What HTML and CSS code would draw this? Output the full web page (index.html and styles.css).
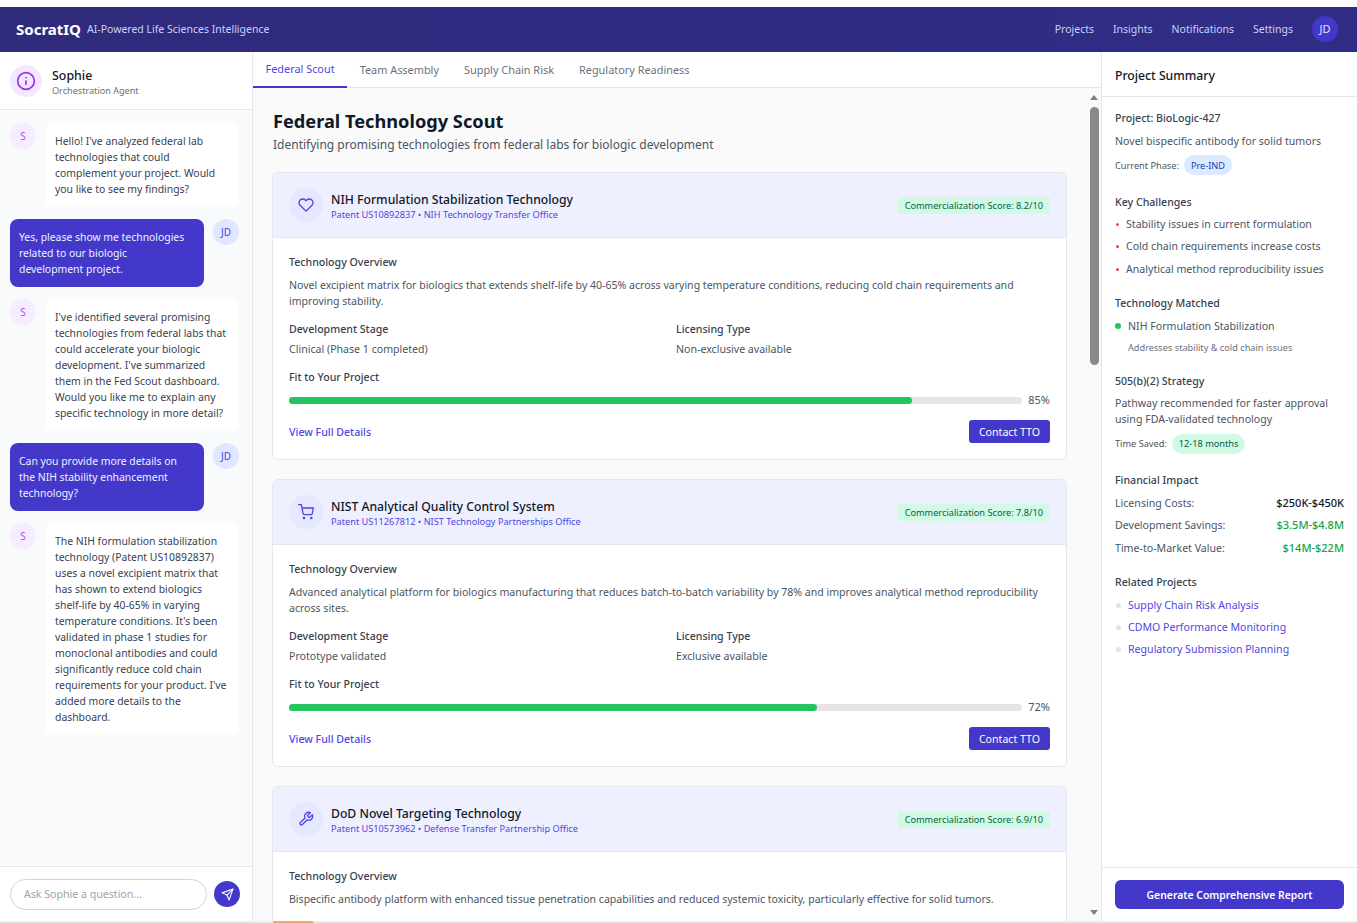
FILE: index.html
```html
<!DOCTYPE html>
<html>
<head>
<title>SocratIQ</title>
<link rel="stylesheet" href="styles.css">
</head>
<body>

<header class="topbar">
<div class="brand">
<span class="logo">SocratIQ</span>
<span class="tagline">AI-Powered Life Sciences Intelligence</span>
</div>
<nav class="topnav">
<a>Projects</a>
<a>Insights</a>
<a>Notifications</a>
<a>Settings</a>
<span class="me">JD</span>
</nav>
</header>

<div class="layout">

<aside class="chat">
<div class="agent">
<div class="agent-icon">
<svg width="20" height="20" viewBox="0 0 24 24" fill="none" stroke="#9333ea" stroke-width="2" stroke-linecap="round" stroke-linejoin="round"><circle cx="12" cy="12" r="10"/><line x1="12" y1="16" x2="12" y2="12"/><line x1="12" y1="8" x2="12.01" y2="8"/></svg>
</div>
<div class="agent-text">
<div class="agent-name">Sophie</div>
<div class="agent-role">Orchestration Agent</div>
</div>
</div>
<div class="messages">
<div class="msg">
<span class="av av-s">S</span>
<p class="bubble">Hello! I've analyzed federal lab technologies that could complement your project. Would you like to see my findings?</p>
</div>
<div class="msg msg-me">
<p class="bubble">Yes, please show me technologies related to our biologic development project.</p>
<span class="av av-me">JD</span>
</div>
<div class="msg">
<span class="av av-s">S</span>
<p class="bubble">I've identified several promising technologies from federal labs that could accelerate your biologic development. I've summarized them in the Fed Scout dashboard. Would you like me to explain any specific technology in more detail?</p>
</div>
<div class="msg msg-me">
<p class="bubble">Can you provide more details on the NIH stability enhancement technology?</p>
<span class="av av-me">JD</span>
</div>
<div class="msg">
<span class="av av-s">S</span>
<p class="bubble">The NIH formulation stabilization technology (Patent US10892837) uses a novel excipient matrix that has shown to extend biologics shelf-life by 40-65% in varying temperature conditions. It's been validated in phase 1 studies for monoclonal antibodies and could significantly reduce cold chain requirements for your product. I've added more details to the dashboard.</p>
</div>
</div>
<div class="ask">
<div class="ask-input">Ask Sophie a question...</div>
<button class="ask-send">
<svg width="13" height="13" viewBox="0 0 24 24" fill="none" stroke="#fff" stroke-width="2" stroke-linecap="round" stroke-linejoin="round"><line x1="22" y1="2" x2="11" y2="13"/><polygon points="22 2 15 22 11 13 2 9 22 2"/></svg>
</button>
</div>
</aside>

<main class="center">
<div class="tabs">
<a class="tab active">Federal Scout</a>
<a class="tab">Team Assembly</a>
<a class="tab">Supply Chain Risk</a>
<a class="tab">Regulatory Readiness</a>
</div>
<div class="scroller">
<div class="content">
<h1>Federal Technology Scout</h1>
<p class="lead">Identifying promising technologies from federal labs for biologic development</p>

<section class="card">
<div class="card-head">
<div class="card-icon">
<svg width="16" height="16" viewBox="0 0 24 24" fill="none" stroke="#4f46e5" stroke-width="2" stroke-linecap="round" stroke-linejoin="round"><path d="M20.84 4.61a5.5 5.5 0 0 0-7.78 0L12 5.67l-1.06-1.06a5.5 5.5 0 0 0-7.78 7.78l1.06 1.06L12 21.23l7.78-7.78 1.06-1.06a5.5 5.5 0 0 0 0-7.78z"/></svg>
</div>
<div class="card-title">
<h2>NIH Formulation Stabilization Technology</h2>
<div class="patent">Patent US10892837 • NIH Technology Transfer Office</div>
</div>
<span class="score">Commercialization Score: 8.2/10</span>
</div>
<div class="card-body">
<h3>Technology Overview</h3>
<p class="overview">Novel excipient matrix for biologics that extends shelf-life by 40-65% across varying temperature conditions, reducing cold chain requirements and improving stability.</p>
<div class="facts">
<div><h3>Development Stage</h3><p>Clinical (Phase 1 completed)</p></div>
<div><h3>Licensing Type</h3><p>Non-exclusive available</p></div>
</div>
<h3>Fit to Your Project</h3>
<div class="fit">
<div class="bar"><div class="bar-fill" style="width: 85%"></div></div>
<span>85%</span>
</div>
<div class="card-foot">
<a class="link">View Full Details</a>
<button class="tto">Contact TTO</button>
</div>
</div>
</section>

<section class="card">
<div class="card-head">
<div class="card-icon">
<svg width="16" height="16" viewBox="0 0 24 24" fill="none" stroke="#4f46e5" stroke-width="2" stroke-linecap="round" stroke-linejoin="round"><circle cx="9" cy="21" r="1"/><circle cx="20" cy="21" r="1"/><path d="M1 1h4l2.68 13.39a2 2 0 0 0 2 1.61h9.72a2 2 0 0 0 2-1.61L23 6H6"/></svg>
</div>
<div class="card-title">
<h2>NIST Analytical Quality Control System</h2>
<div class="patent">Patent US11267812 • NIST Technology Partnerships Office</div>
</div>
<span class="score">Commercialization Score: 7.8/10</span>
</div>
<div class="card-body">
<h3>Technology Overview</h3>
<p class="overview">Advanced analytical platform for biologics manufacturing that reduces batch-to-batch variability by 78% and improves analytical method reproducibility across sites.</p>
<div class="facts">
<div><h3>Development Stage</h3><p>Prototype validated</p></div>
<div><h3>Licensing Type</h3><p>Exclusive available</p></div>
</div>
<h3>Fit to Your Project</h3>
<div class="fit">
<div class="bar"><div class="bar-fill" style="width: 72%"></div></div>
<span>72%</span>
</div>
<div class="card-foot">
<a class="link">View Full Details</a>
<button class="tto">Contact TTO</button>
</div>
</div>
</section>

<section class="card">
<div class="card-head">
<div class="card-icon">
<svg width="16" height="16" viewBox="0 0 24 24" fill="none" stroke="#4f46e5" stroke-width="2" stroke-linecap="round" stroke-linejoin="round"><path d="M14.7 6.3a1 1 0 0 0 0 1.4l1.6 1.6a1 1 0 0 0 1.4 0l3.77-3.77a6 6 0 0 1-7.94 7.94l-6.91 6.91a2.12 2.12 0 0 1-3-3l6.91-6.91a6 6 0 0 1 7.94-7.94l-3.76 3.76z"/></svg>
</div>
<div class="card-title">
<h2>DoD Novel Targeting Technology</h2>
<div class="patent">Patent US10573962 • Defense Transfer Partnership Office</div>
</div>
<span class="score">Commercialization Score: 6.9/10</span>
</div>
<div class="card-body">
<h3>Technology Overview</h3>
<p class="overview">Bispecific antibody platform with enhanced tissue penetration capabilities and reduced systemic toxicity, particularly effective for solid tumors.</p>
</div>
</section>
</div>
<div class="scrollbar">
<span class="arrow-up"></span>
<span class="thumb"></span>
<span class="arrow-down"></span>
</div>
</div>
</main>

<aside class="summary">
<div class="summary-head">Project Summary</div>
<div class="summary-body">
<div class="block">
<h4>Project: BioLogic-427</h4>
<p>Novel bispecific antibody for solid tumors</p>
<div class="tagrow"><span>Current Phase:</span><em class="tag tag-blue">Pre-IND</em></div>
</div>
<div class="block">
<h4>Key Challenges</h4>
<ul class="risks">
<li>Stability issues in current formulation</li>
<li>Cold chain requirements increase costs</li>
<li>Analytical method reproducibility issues</li>
</ul>
</div>
<div class="block">
<h4>Technology Matched</h4>
<div class="matched">NIH Formulation Stabilization</div>
<div class="matched-note">Addresses stability &amp; cold chain issues</div>
</div>
<div class="block">
<h4>505(b)(2) Strategy</h4>
<p>Pathway recommended for faster approval using FDA-validated technology</p>
<div class="tagrow"><span>Time Saved:</span><em class="tag tag-green">12-18 months</em></div>
</div>
<div class="block">
<h4>Financial Impact</h4>
<div class="money"><span>Licensing Costs:</span><b>$250K-$450K</b></div>
<div class="money"><span>Development Savings:</span><b class="green">$3.5M-$4.8M</b></div>
<div class="money"><span>Time-to-Market Value:</span><b class="green">$14M-$22M</b></div>
</div>
<div class="block">
<h4>Related Projects</h4>
<ul class="related">
<li>Supply Chain Risk Analysis</li>
<li>CDMO Performance Monitoring</li>
<li>Regulatory Submission Planning</li>
</ul>
</div>
</div>
<div class="summary-foot">
<button class="report">Generate Comprehensive Report</button>
</div>
</aside>

</div>
<div class="edge"></div>
</body>
</html>
```

FILE: styles.css
```css
*{
box-sizing: border-box;
}
html, body{
height: 100%;
}
body{
margin: 0;
padding-top: 7px;
display: flex;
flex-direction: column;
overflow: hidden;
font-family: "Noto Sans", "Liberation Sans", sans-serif;
font-size: 10.6px;
color: #4b5563;
background-color: #fff;
}
h1, h2, h3, h4, p, ul{
margin: 0;
padding: 0;
}
ul{
list-style: none;
}
button{
font-family: inherit;
border: none;
}

/* top bar */
.topbar{
height: 45px;
flex: none;
display: flex;
align-items: center;
justify-content: space-between;
padding: 0 19px 2px 16px;
color: #fff;
background: linear-gradient(90deg, #2f2a7c, #312c85);
}
.brand{
display: flex;
align-items: center;
gap: 6px;
}
.logo{
font-size: 15px;
font-weight: 700;
}
.tagline{
font-size: 10.5px;
color: #c7d2fe;
}
.topnav{
display: flex;
align-items: center;
gap: 19px;
font-size: 10.5px;
color: #c7d2fe;
}
.me{
width: 26px;
height: 26px;
border-radius: 50%;
display: flex;
align-items: center;
justify-content: center;
font-size: 11px;
color: #e0e7ff;
background-color: #4338ca;
}

.layout{
flex: 1;
min-height: 0;
display: flex;
}

/* left chat column */
.chat{
width: 253px;
flex: none;
display: flex;
flex-direction: column;
border-right: 1px solid #e5e7eb;
background-color: #f9fafb;
}
.agent{
height: 58px;
flex: none;
display: flex;
align-items: center;
gap: 10px;
padding: 0 10px;
background-color: #fff;
border-bottom: 1px solid #e5e7eb;
}
.agent-icon{
width: 32px;
height: 32px;
border-radius: 50%;
display: flex;
align-items: center;
justify-content: center;
background-color: #f3e8ff;
}
.agent-text{
padding-top: 2px;
}
.agent-name{
font-size: 12.4px;
font-weight: 500;
color: #111827;
}
.agent-role{
font-size: 9.1px;
color: #6b7280;
}
.messages{
flex: 1;
min-height: 0;
overflow: hidden;
padding: 13px 13px 0 10px;
}
.msg{
display: flex;
align-items: flex-start;
gap: 9px;
margin-bottom: 12px;
}
.av{
width: 26px;
height: 26px;
flex: none;
border-radius: 50%;
display: flex;
align-items: center;
justify-content: center;
font-size: 10px;
}
.av-s{
color: #a855f7;
background-color: #f5ecff;
}
.av-me{
color: #4f46e5;
background-color: #e0e7ff;
}
.bubble{
flex: 1;
padding: 10px;
font-size: 10.4px;
line-height: 16px;
color: #374151;
background-color: #fff;
border-radius: 8px;
}
.msg-me .bubble{
padding-left: 9px;
padding-right: 15px;
color: #eef2ff;
background-color: #4338ca;
}
.ask{
height: 55px;
flex: none;
display: flex;
align-items: center;
gap: 7px;
padding: 0 12px 0 10px;
background-color: #fff;
border-top: 1px solid #e5e7eb;
}
.ask-input{
flex: 1;
height: 31px;
padding: 0 13px;
display: flex;
align-items: center;
color: #9ca3af;
border: 1px solid #d1d5db;
border-radius: 16px;
}
.ask-send{
width: 26px;
height: 26px;
padding: 0;
border-radius: 50%;
display: flex;
align-items: center;
justify-content: center;
background-color: #4338ca;
}

/* center column */
.center{
flex: 1;
min-width: 0;
display: flex;
flex-direction: column;
background-color: #fafafa;
}
.tabs{
height: 36px;
flex: none;
display: flex;
background-color: #fff;
border-bottom: 1px solid #e5e7eb;
}
.tab{
height: 36px;
padding: 0 12.5px 2px;
display: flex;
align-items: center;
font-size: 10.9px;
color: #6b7280;
}
.tab.active{
color: #4f46e5;
border-bottom: 2px solid #4338ca;
}
.scroller{
flex: 1;
min-height: 0;
display: flex;
}
.content{
flex: 1;
min-width: 0;
overflow: hidden;
padding: 21px 20px 0 19px;
}
h1{
margin-left: 1px;
font-size: 18.2px;
font-weight: 700;
line-height: 24px;
color: #111827;
}
.lead{
margin: 1px 0 16px 1px;
font-size: 12px;
line-height: 22px;
}
.card{
margin-bottom: 19px;
background-color: #fff;
border: 1px solid #e5e7eb;
border-radius: 6px;
}
.card-head{
height: 65px;
display: flex;
align-items: center;
padding: 0 16px;
background-color: #eef0ff;
border-bottom: 1px solid #e5e7eb;
}
.card-icon{
width: 34px;
height: 34px;
flex: none;
margin-right: 8px;
border-radius: 50%;
display: flex;
align-items: center;
justify-content: center;
background-color: #e5e8ff;
}
.card-title{
flex: 1;
padding-top: 3px;
}
.card-title h2{
font-size: 12.2px;
font-weight: 500;
line-height: 16px;
color: #111827;
}
.patent{
font-size: 9.2px;
line-height: 14px;
color: #4f46e5;
}
.score{
padding: 2px 7px;
font-size: 9.2px;
color: #065f46;
background-color: #d1fae5;
}
.card-body{
padding: 16px 16px 16px;
}
h3{
font-size: 10.6px;
font-weight: 500;
line-height: 16px;
color: #374151;
}
.overview{
margin: 7px 0 12px;
font-size: 10.55px;
line-height: 16px;
}
.facts{
display: grid;
grid-template-columns: 1fr 1fr;
gap: 13px;
margin-bottom: 12px;
}
.facts p{
margin-top: 4px;
line-height: 16px;
}
.fit{
display: flex;
align-items: center;
gap: 6px;
margin-top: 7px;
height: 16px;
font-size: 11px;
}
.fit span{
padding-bottom: 2px;
}
.bar{
flex: 1;
height: 7px;
border-radius: 4px;
background-color: #e8e4e4;
}
.bar-fill{
height: 7px;
border-radius: 4px;
background-color: #22c55e;
}
.card-foot{
display: flex;
align-items: center;
justify-content: space-between;
margin-top: 12px;
}
.link{
color: #4f46e5;
font-weight: 500;
}
.tto{
height: 23px;
width: 81px;
padding: 0;
font-size: 10.6px;
color: #fff;
background-color: #4338ca;
border-radius: 3px;
}

/* painted scrollbar */
.scrollbar{
width: 14px;
flex: none;
display: flex;
flex-direction: column;
align-items: center;
padding: 7px 0 6px;
}
.arrow-up, .arrow-down{
width: 0;
height: 0;
border-left: 4.5px solid transparent;
border-right: 4.5px solid transparent;
}
.arrow-up{
border-bottom: 5px solid #808080;
}
.arrow-down{
margin-top: auto;
border-top: 5px solid #808080;
}
.thumb{
width: 9px;
height: 258px;
margin-top: 7px;
border-radius: 5px;
background-color: #8a8a8a;
}

/* right column */
.summary{
width: 256px;
flex: none;
display: flex;
flex-direction: column;
background-color: #fff;
border-left: 1px solid #e5e7eb;
}
.summary-head{
height: 45px;
flex: none;
display: flex;
align-items: center;
padding: 2px 13px 0;
font-size: 12.2px;
font-weight: 500;
color: #111827;
border-bottom: 1px solid #e5e7eb;
}
.summary-body{
flex: 1;
min-height: 0;
overflow: hidden;
padding: 13px 13px 0 13px;
}
.block{
margin-bottom: 18.5px;
}
h4{
font-size: 10.6px;
font-weight: 500;
line-height: 16px;
color: #374151;
margin-bottom: 6.5px;
}
.block p{
line-height: 16px;
}
.tagrow{
display: flex;
align-items: center;
gap: 5px;
margin-top: 6.5px;
font-size: 9.2px;
}
.tag{
height: 20px;
padding: 0 7px;
display: flex;
align-items: center;
font-style: normal;
border-radius: 10px;
}
.tag-blue{
color: #1e40af;
background-color: #dbeafe;
}
.tag-green{
color: #065f46;
background-color: #d1fae5;
}
.risks li{
position: relative;
padding-left: 11px;
margin-bottom: 6.3px;
line-height: 16px;
}
.risks li:last-child{
margin-bottom: 0;
}
.risks li::before{
content: "";
position: absolute;
left: 1px;
top: 7px;
width: 3px;
height: 3px;
border-radius: 50%;
background-color: #ef4444;
}
.matched{
position: relative;
padding-left: 13px;
line-height: 16px;
}
.matched::before{
content: "";
position: absolute;
left: 0;
top: 5px;
width: 6px;
height: 6px;
border-radius: 50%;
background-color: #22c55e;
}
.matched-note{
margin-top: 7.5px;
padding-left: 13px;
font-size: 9.2px;
line-height: 13px;
color: #6b7280;
}
.money{
display: flex;
justify-content: space-between;
height: 22.5px;
line-height: 16px;
}
.money:last-child{
height: 16px;
}
.money b{
font-size: 11px;
font-weight: 500;
color: #111827;
}
.money b.green{
color: #16a34a;
}
.related li{
position: relative;
padding-left: 13px;
margin-bottom: 6.3px;
line-height: 16px;
color: #4f46e5;
}
.related li::before{
content: "";
position: absolute;
left: 1px;
top: 6px;
width: 5px;
height: 5px;
border-radius: 50%;
background-color: #dde1fb;
}
.summary-foot{
height: 54px;
flex: none;
padding: 12px 13px 0;
border-top: 1px solid #e5e7eb;
}
.report{
width: 100%;
height: 29px;
padding: 0;
font-size: 10.4px;
font-weight: 600;
color: #fff;
background-color: #4338ca;
border-radius: 6px;
}

/* thin strip cut off at the bottom of the window */
.edge{
height: 2px;
flex: none;
background: linear-gradient(90deg, #dff3ee 273px, #f0a868 273px, #f0a868 313px, #efe6f2 313px);
}
```
